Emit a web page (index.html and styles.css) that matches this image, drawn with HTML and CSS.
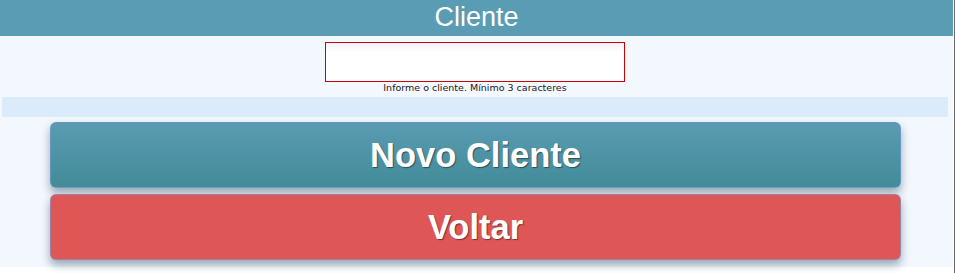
FILE: index.html
```html
<!DOCTYPE html>
<html lang="pt-BR">
<head>
<meta charset="utf-8">
<title>Cliente</title>
<link rel="stylesheet" href="styles.css">
</head>
<body>
<div class="window">
  <div class="app">
    <header class="topbar">Cliente</header>
    <section class="search">
      <input class="search-input" type="text" aria-label="Cliente">
      <div class="hint">Informe o cliente. Mínimo 3 caracteres</div>
    </section>
    <div class="results"></div>
    <div class="actions">
      <button class="btn btn-primary">Novo Cliente</button>
      <button class="btn btn-danger">Voltar</button>
    </div>
  </div>
  <div class="edge"></div>
</div>
</body>
</html>
```
FILE: styles.css
```css
html, body {
  margin: 0;
  padding: 0;
  background: #ffffff;
}
.window {
  display: flex;
  align-items: flex-start;
  gap: 1px;
  height: 273px;
}
.app {
  width: 953px;
  height: 267px;
  background: #f3f7fe;
  display: flex;
  flex-direction: column;
}
.edge {
  width: 1px;
  height: 273px;
  background: #6b6b6b;
}
.topbar {
  height: 36px;
  background: #5a9cb4;
  color: #ffffff;
  font-family: "Liberation Sans", Arial, sans-serif;
  font-size: 27px;
  line-height: 34px;
  text-align: center;
}
.search {
  display: flex;
  flex-direction: column;
  align-items: center;
  padding: 6px 3px 0 0;
}
.search-input {
  box-sizing: border-box;
  width: 300px;
  height: 40px;
  margin: 0;
  border: 1px solid #cc0000;
  background: linear-gradient(#eef1f8 0, #ffffff 9px);
  outline: none;
}
.hint {
  font-family: "DejaVu Sans", Verdana, sans-serif;
  font-size: 9.5px;
  line-height: 12px;
  color: #1a1a1a;
}
.results {
  height: 20px;
  width: 946px;
  margin: 3px 0 0 2px;
  background: #dcebfc;
}
.actions {
  display: flex;
  flex-direction: column;
  gap: 6px;
  padding: 5px 0 0 50px;
}
.btn {
  box-sizing: border-box;
  width: 851px;
  height: 66px;
  border: 1px solid rgba(120, 160, 210, 0.6);
  border-radius: 6px;
  color: #ffffff;
  font-family: "Liberation Sans", Arial, sans-serif;
  font-weight: bold;
  font-size: 34.5px;
  text-shadow: 1px 1px 1px rgba(0, 0, 0, 0.45);
  box-shadow: 0 5px 8px rgba(40, 70, 90, 0.45);
  padding: 0;
  cursor: pointer;
}
.btn-primary {
  background: linear-gradient(#5a9bb2, #428b98);
}
.btn-danger {
  background: #df5656;
}
```
